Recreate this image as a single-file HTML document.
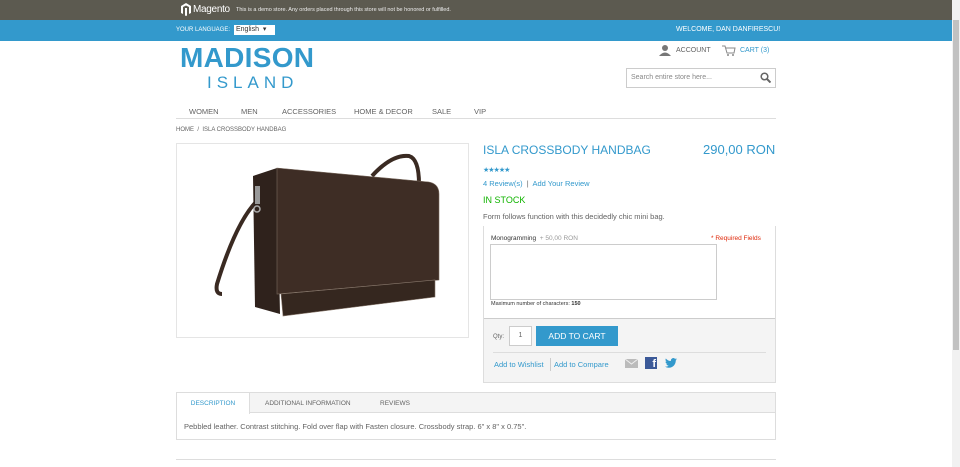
<!DOCTYPE html>
<html><head><meta charset="utf-8"><style>
*{margin:0;padding:0;box-sizing:border-box}
body{width:960px;height:467px;overflow:hidden;background:#fff;font-family:"Liberation Sans",sans-serif;color:#636363;position:relative}
.abs{position:absolute;white-space:nowrap}
.demo{top:0;left:0;width:952px;height:20px;background:#5c5a50;color:#eee;font-size:6px}
.hdr{top:20px;left:0;width:952px;height:21px;background:#3399cc;color:#fff;font-size:7px}
.sb{top:0;left:952px;width:8px;height:467px;background:#f1f1f1}
.sb div{position:absolute;left:1px;top:20px;width:6px;height:330px;background:#c1c1c1}
.nav span{position:absolute;font-size:7.5px;color:#636363;top:107px}
.lnk{color:#3399cc}
</style></head><body>
<div class="abs demo">
 <svg class="abs" style="left:181px;top:3px" width="10" height="13" viewBox="0 0 10 13"><path d="M5 0L10 3V10L8 11V4L5 2.5L2 4V11L0 10V3Z M4 5H6V12.5L5 13L4 12.5Z" fill="#fff"/></svg>
 <span class="abs" style="left:193px;top:4px;font-size:10px;color:#fff;letter-spacing:-0.3px">Magento</span>
 <span class="abs" style="left:236px;top:7px;font-size:5.5px">This is a demo store. Any orders placed through this store will not be honored or fulfilled.</span>
</div>
<div class="abs hdr">
 <span class="abs" style="left:176px;top:7px;font-size:6px">YOUR LANGUAGE:</span>
 <span class="abs" style="left:234px;top:5px;width:41px;height:10px;background:#fff;color:#333;font-size:7px;padding-left:2px;line-height:10px">English &nbsp;▾</span>
 <span class="abs" style="left:676px;top:6px">WELCOME, DAN DANFIRESCU!</span>
</div>
<div class="abs" style="left:180px;top:42px;font-size:28px;font-weight:bold;color:#3399cc;letter-spacing:0.3px">MADISON</div>
<div class="abs" style="left:207px;top:73px;font-size:17px;color:#3399cc;letter-spacing:5px">ISLAND</div>
<svg class="abs" style="left:659px;top:45px" width="12" height="11"><circle cx="6" cy="3" r="3" fill="#777"/><path d="M0 11Q6 4 12 11Z" fill="#777"/></svg>
<span class="abs" style="left:676px;top:47px;font-size:7px">ACCOUNT</span>
<svg class="abs" style="left:722px;top:45px" width="14" height="11"><path d="M0 1H3L5 8H12L13 3H4" fill="none" stroke="#888"/><circle cx="6" cy="10" r="1" fill="#888"/><circle cx="11" cy="10" r="1" fill="#888"/></svg>
<span class="abs lnk" style="left:740px;top:47px;font-size:7px">CART (3)</span>
<div class="abs" style="left:626px;top:68px;width:150px;height:20px;border:1px solid #ccc;font-size:7px;color:#888;padding:5px 4px">Search entire store here...</div>
<svg class="abs" style="left:760px;top:72px" width="11" height="11"><circle cx="4.5" cy="4.5" r="3.3" fill="none" stroke="#666" stroke-width="1.5"/><path d="M7 7L10.5 10.5" stroke="#666" stroke-width="2"/></svg>
<div class="nav"><span style="left:189px">WOMEN</span><span style="left:241px">MEN</span><span style="left:282px">ACCESSORIES</span><span style="left:354px">HOME &amp; DECOR</span><span style="left:432px">SALE</span><span style="left:474px">VIP</span></div>
<div class="abs" style="left:176px;top:118px;width:600px;border-top:1px solid #ddd"></div>
<span class="abs" style="left:176px;top:127px;font-size:6px">HOME &nbsp;/&nbsp; ISLA CROSSBODY HANDBAG</span>
<div class="abs" style="left:176px;top:143px;width:293px;height:195px;border:1px solid #e5e5e5">
<svg width="291" height="193" viewBox="0 0 291 193">
<path d="M195 32Q215 10 232 12Q242 15 242 40" fill="none" stroke="#3a2a22" stroke-width="4"/>
<path d="M82 55Q60 75 40 140Q38 150 45 150" fill="none" stroke="#3a2a22" stroke-width="4"/>
<path d="M76 32L100 24L103 170L78 163Z" fill="#2f221c"/>
<path d="M100 24L252 38Q262 40 262 50L262 136L100 150Z" fill="#3e2d25" stroke="#7a6a5e" stroke-width="0.6"/>
<path d="M104 150L258 136L258 153L106 172Z" fill="#35271f" stroke="#8a7a6e" stroke-width="0.6"/>
<rect x="78" y="42" width="5" height="18" fill="#999"/>
<circle cx="80" cy="65" r="3" fill="none" stroke="#aaa" stroke-width="1.5"/>
</svg></div>
<div class="abs" style="left:483px;top:143px;font-size:12px;color:#3399cc">ISLA CROSSBODY HANDBAG</div>
<div class="abs" style="left:703px;top:142px;font-size:13px;color:#3399cc">290,00 RON</div>
<div class="abs" style="left:483px;top:166px;font-size:7px;color:#3399cc;letter-spacing:-1px">★★★★★</div>
<div class="abs lnk" style="left:483px;top:179px;font-size:7.5px">4 Review(s) &nbsp;<span style="color:#636363">|</span>&nbsp; Add Your Review</div>
<div class="abs" style="left:483px;top:195px;font-size:9px;color:#11b400">IN STOCK</div>
<div class="abs" style="left:483px;top:212px;font-size:7.5px">Form follows function with this decidedly chic mini bag.</div>
<div class="abs" style="left:483px;top:226px;width:293px;height:157px;border:1px solid #ddd;border-top:none;background:#fff"></div>
<div class="abs" style="left:484px;top:318px;width:291px;height:64px;background:#f4f4f4;border-top:1px solid #ccc"></div>
<span class="abs" style="left:491px;top:235px;font-size:6.5px;color:#333">Monogramming &nbsp;<span style="color:#999">+ 50,00 RON</span></span>
<span class="abs" style="left:711px;top:235px;font-size:6.5px;color:#df280a">* Required Fields</span>
<div class="abs" style="left:490px;top:244px;width:227px;height:56px;border:1px solid #ccc"></div>
<span class="abs" style="left:491px;top:301px;font-size:5.5px;color:#333">Maximum number of characters: <b>150</b></span>
<span class="abs" style="left:493px;top:334px;font-size:6px">Qty:</span>
<div class="abs" style="left:509px;top:326px;width:23px;height:20px;border:1px solid #ccc;background:#fff;font-size:7px;text-align:center;line-height:18px">1</div>
<div class="abs" style="left:536px;top:326px;width:82px;height:20px;background:#3399cc;color:#fff;font-size:8.5px;text-align:center;line-height:20px">ADD TO CART</div>
<div class="abs" style="left:493px;top:352px;width:273px;border-top:1px solid #ddd"></div>
<span class="abs lnk" style="left:494px;top:360px;font-size:7.5px">Add to Wishlist</span>
<div class="abs" style="left:550px;top:358px;height:13px;border-left:1px solid #ccc"></div>
<span class="abs lnk" style="left:554px;top:360px;font-size:7.5px">Add to Compare</span>
<svg class="abs" style="left:625px;top:359px" width="13" height="9"><rect width="13" height="9" fill="#bbb"/><path d="M0 0L6.5 5L13 0" fill="none" stroke="#eee"/></svg>
<div class="abs" style="left:645px;top:357px;width:12px;height:12px;background:#3b5998;color:#fff;font-size:11px;font-weight:bold;text-align:right;line-height:14px;padding-right:1px">f</div>
<svg class="abs" style="left:665px;top:358px" width="12" height="10" viewBox="0 0 24 20"><path d="M24 2.4a10 10 0 0 1-2.8.8A5 5 0 0 0 23.3.5a10 10 0 0 1-3.1 1.2A4.9 4.9 0 0 0 11.8 6 14 14 0 0 1 1.7.9a4.9 4.9 0 0 0 1.5 6.6A4.9 4.9 0 0 1 1 6.9a4.9 4.9 0 0 0 3.9 4.8 5 5 0 0 1-2.2.1 4.9 4.9 0 0 0 4.6 3.4A9.9 9.9 0 0 1 0 17.3 14 14 0 0 0 7.5 19.5c9.1 0 14-7.5 14-14v-.6A10 10 0 0 0 24 2.4z" fill="#3399cc"/></svg>
<div class="abs" style="left:176px;top:392px;width:600px;height:48px;border:1px solid #ddd"></div>
<div class="abs" style="left:177px;top:393px;width:598px;height:20px;background:#f4f4f4;border-bottom:1px solid #ddd"></div>
<div class="abs" style="left:177px;top:393px;width:73px;height:21px;background:#fff;border-right:1px solid #ddd;font-size:6.5px;color:#3399cc;text-align:center;line-height:21px">DESCRIPTION</div>
<span class="abs" style="left:265px;top:400px;font-size:6.5px">ADDITIONAL INFORMATION</span>
<span class="abs" style="left:380px;top:400px;font-size:6.5px">REVIEWS</span>
<span class="abs" style="left:184px;top:422px;font-size:7.5px">Pebbled leather. Contrast stitching. Fold over flap with Fasten closure. Crossbody strap. 6" x 8" x 0.75".</span>
<div class="abs" style="left:176px;top:459px;width:600px;border-top:1px solid #ddd"></div>
<div class="abs sb"><div></div></div>
</body></html>
